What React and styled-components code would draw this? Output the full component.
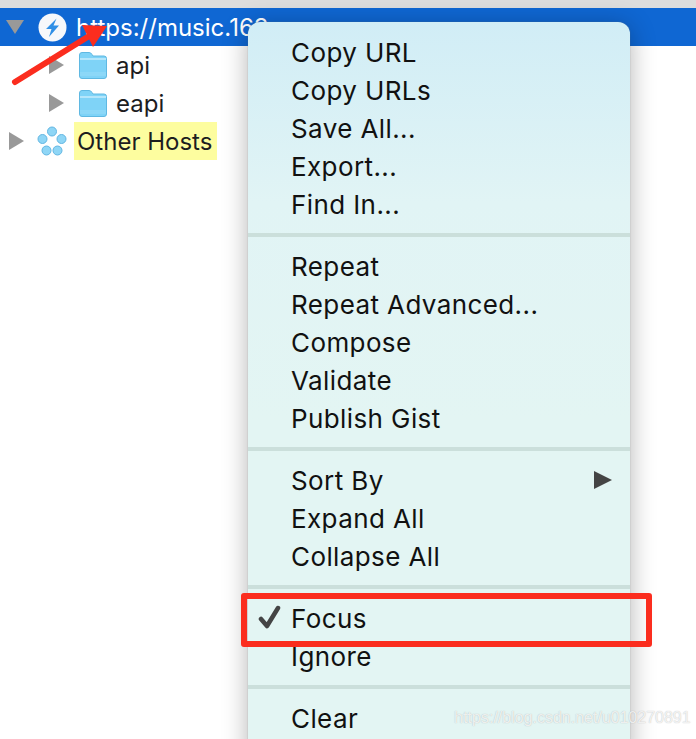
import React from 'react';
import styled, { createGlobalStyle } from 'styled-components';

const Global = createGlobalStyle`
  html, body {
    margin: 0;
    padding: 0;
    background: #fff;
  }
`;

const Page = styled.div`
  position: relative;
  width: 696px;
  height: 739px;
  overflow: hidden;
  background: #fff;
  font-family: Inter, "Noto Sans", sans-serif;
  color: #1d1d1f;
`;

const TopBar = styled.div`
  height: 8px;
  background: #dddddd;
`;

const TreeRow = styled.div`
  display: flex;
  align-items: center;
  height: 38px;
  padding-left: ${p => p.$indent}px;
  background: ${p => (p.$selected ? '#0f67d3' : 'transparent')};
  color: ${p => (p.$selected ? '#fff' : '#1d1d1f')};
`;

const Arrow = styled.svg`
  width: ${p => p.$w || 16}px;
  height: 18px;
  flex: none;
  fill: #999;
`;

const IconSlot = styled.div`
  display: flex;
  align-items: center;
  justify-content: center;
  flex: none;
  width: ${p => p.$w}px;
  margin-left: ${p => p.$ml}px;
`;

const Label = styled.span`
  font-size: 24px;
  height: 38px;
  line-height: 40px;
  margin-left: ${p => p.$ml}px;
  white-space: nowrap;
`;

const Highlight = styled(Label)`
  background: #fdfd9f;
  padding: 0 5px 0 3px;
  margin-left: 7px;
`;

const Menu = styled.div`
  position: absolute;
  left: 248px;
  top: 22px;
  width: 382px;
  height: 740px;
  box-sizing: border-box;
  padding-top: 12px;
  border-radius: 12px 12px 0 0;
  background: linear-gradient(180deg, #d1edf6 0px, #e1f4f5 180px, #e3f5f3 400px);
  box-shadow: 0 0 1px #777, 0 4px 26px rgba(0, 0, 0, 0.3);
`;

const Item = styled.div`
  position: relative;
  display: flex;
  align-items: center;
  justify-content: space-between;
  box-sizing: border-box;
  height: 38px;
  padding: 0 18px 2px 43px;
  font-size: 26px;
  letter-spacing: 0.4px;
  color: #111;
`;

const Check = styled.svg`
  position: absolute;
  left: 10px;
  top: 5px;
  width: 23px;
  height: 25px;
`;

const Sep = styled.div`
  height: 4px;
  margin: 9px 0 11px;
  background: #cbdfdb;
`;

const RedBox = styled.div`
  position: absolute;
  left: 241px;
  top: 593px;
  width: 399px;
  height: 42px;
  border: 6px solid #fb2d1e;
  border-radius: 3px;
`;

const RedArrow = styled.svg`
  position: absolute;
  left: 0;
  top: 0;
  width: 130px;
  height: 100px;
`;

const Watermark = styled.div`
  position: absolute;
  left: 454px;
  top: 709px;
  font-family: "Liberation Sans", sans-serif;
  font-size: 16px;
  color: rgba(255, 255, 255, 0.8);
  text-shadow: 0 0 1px rgba(120, 120, 120, 0.55);
`;

const TriRight = () => (
  <Arrow viewBox="0 0 16 18"><path d="M1 0 16 9 1 18Z" /></Arrow>
);

const TriDown = () => (
  <Arrow $w={18} viewBox="0 0 18 18"><path d="M0 2h18L9 16Z" /></Arrow>
);

const Bolt = () => (
  <svg width="29" height="29" viewBox="0 0 29 29">
    <circle cx="14.5" cy="14.5" r="14" fill="#f6f8fb" />
    <path d="M18.5 5.5 8 16h5.5l-2.5 8 10-11.5h-5.5Z" fill="#2f8fe6" />
  </svg>
);

const Folder = () => (
  <svg width="28" height="27" viewBox="0 0 28 27">
    <path d="M.5 3Q.5 .5 3 .5H10Q12 .5 13 2.5L14 4H25Q27.5 4 27.5 6.5V24Q27.5 26.5 25 26.5H3Q.5 26.5 .5 24Z" fill="#7fd3f7" stroke="#5fb8e2" />
    <path d="M1 7H27" stroke="#b4e6fb" strokeWidth="2" />
    <path d="M1 21H27M1 23H27" stroke="#9adcf8" />
  </svg>
);

const Hosts = () => (
  <svg width="30" height="30" viewBox="0 0 30 30" fill="#8fd6f6" stroke="#62b6e2">
    <circle cx="15" cy="5.5" r="4.5" />
    <circle cx="5.5" cy="13" r="4.5" />
    <circle cx="24.5" cy="13" r="4.5" />
    <circle cx="9.5" cy="24.5" r="4.5" />
    <circle cx="20.5" cy="24.5" r="4.5" />
  </svg>
);

const groups = [
  ['Copy URL', 'Copy URLs', 'Save All...', 'Export...', 'Find In...'],
  ['Repeat', 'Repeat Advanced...', 'Compose', 'Validate', 'Publish Gist'],
  ['Sort By', 'Expand All', 'Collapse All'],
  ['Focus', 'Ignore'],
  ['Clear'],
];

export default function App() {
  return (
    <Page>
      <Global />
      <TopBar />
      <TreeRow $selected $indent={6}>
        <TriDown />
        <IconSlot $w={29} $ml={14}><Bolt /></IconSlot>
        <Label $ml={9}>https://music.163.com</Label>
      </TreeRow>
      <TreeRow $indent={48}>
        <TriRight />
        <IconSlot $w={28} $ml={15}><Folder /></IconSlot>
        <Label $ml={9}>api</Label>
      </TreeRow>
      <TreeRow $indent={48}>
        <TriRight />
        <IconSlot $w={28} $ml={15}><Folder /></IconSlot>
        <Label $ml={9}>eapi</Label>
      </TreeRow>
      <TreeRow $indent={8}>
        <TriRight />
        <IconSlot $w={30} $ml={13}><Hosts /></IconSlot>
        <Highlight>Other Hosts</Highlight>
      </TreeRow>

      <RedArrow viewBox="0 0 130 100">
        <path d="M15 82 94 33" stroke="#fb2d1e" strokeWidth="6" strokeLinecap="round" />
        <path d="M82 25 107 26 93 47Z" fill="#fb2d1e" />
      </RedArrow>

      <Menu>
        {groups.map((group, i) => (
          <React.Fragment key={group[0]}>
            {i > 0 && <Sep />}
            {group.map(name => (
              <Item key={name}>
                {name === 'Focus' && (
                  <Check viewBox="0 0 23 25">
                    <path d="M3 14 9 21 20 3" fill="none" stroke="#444" strokeWidth="4.5" strokeLinecap="round" strokeLinejoin="round" />
                  </Check>
                )}
                <span>{name}</span>
                {name === 'Sort By' && (
                  <svg width="18" height="18" viewBox="0 0 18 18">
                    <path d="M0 0 18 9 0 18Z" fill="#444" />
                  </svg>
                )}
              </Item>
            ))}
          </React.Fragment>
        ))}
      </Menu>

      <RedBox />
      <Watermark>https://blog.csdn.net/u010270891</Watermark>
    </Page>
  );
}
